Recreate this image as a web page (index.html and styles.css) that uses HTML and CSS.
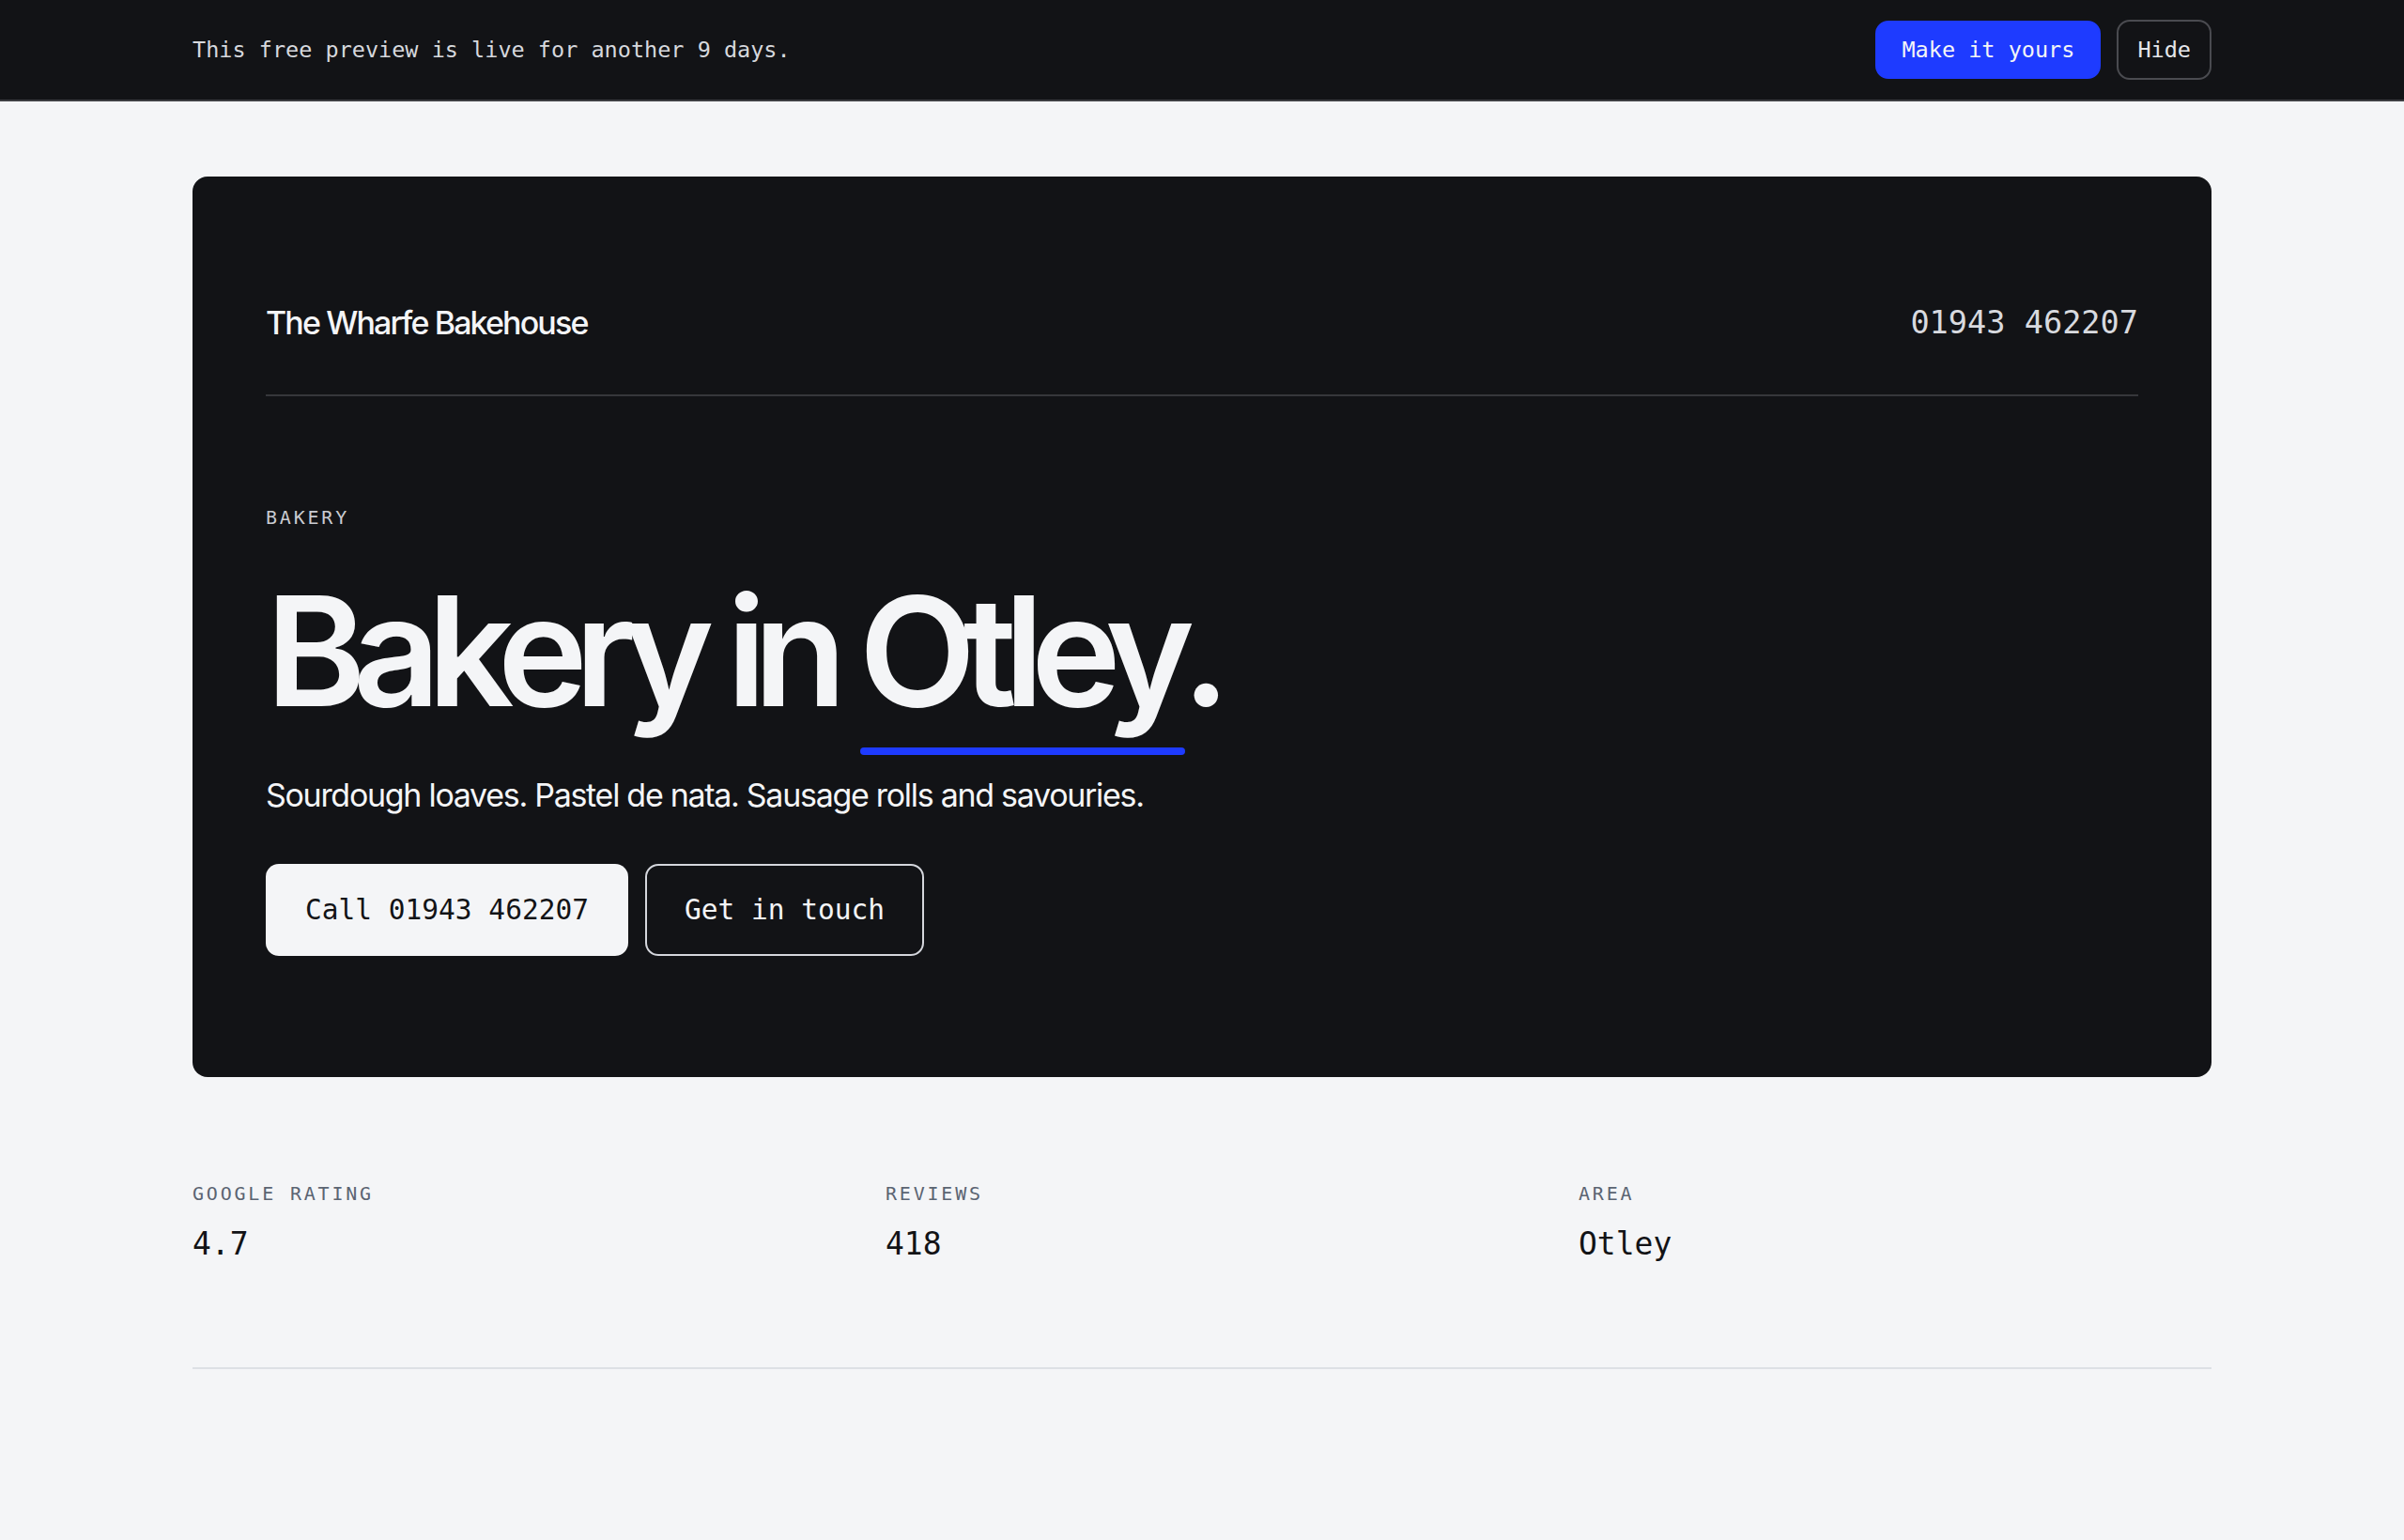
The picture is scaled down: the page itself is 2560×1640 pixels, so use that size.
FILE: index.html
```html
<!DOCTYPE html>
<html lang="en">
<head>
<meta charset="utf-8">
<title>The Wharfe Bakehouse — Bakery in Otley</title>
<link rel="stylesheet" href="styles.css">
</head>
<body>
  <div class="preview-bar">
    <div class="wrap preview-inner">
      <p class="preview-text">This free preview is live for another 9 days.</p>
      <div class="preview-actions">
        <button class="btn-claim" type="button">Make it yours</button>
        <button class="btn-hide" type="button">Hide</button>
      </div>
    </div>
  </div>

  <main class="wrap">
    <section class="hero-card">
      <header class="hero-head">
        <span class="brand">The Wharfe Bakehouse</span>
        <span class="head-phone">01943 462207</span>
      </header>
      <div class="hero-body">
        <p class="eyebrow">BAKERY</p>
        <h1 class="hero-title">Bakery in <span class="hl">Otley</span>.</h1>
        <p class="hero-sub">Sourdough loaves. Pastel de nata. Sausage rolls and savouries.</p>
        <div class="hero-actions">
          <a class="btn-primary" href="#">Call 01943 462207</a>
          <a class="btn-outline" href="#">Get in touch</a>
        </div>
      </div>
    </section>

    <section class="stats">
      <div class="stat">
        <span class="stat-label">GOOGLE RATING</span>
        <span class="stat-value">4.7</span>
      </div>
      <div class="stat">
        <span class="stat-label">REVIEWS</span>
        <span class="stat-value">418</span>
      </div>
      <div class="stat">
        <span class="stat-label">AREA</span>
        <span class="stat-value">Otley</span>
      </div>
    </section>
  </main>
</body>
</html>
```

FILE: styles.css
```css
* { box-sizing: border-box; }

html, body {
  margin: 0;
  padding: 0;
}

body {
  background: #f4f5f7;
  color: #121316;
  font-family: "Inter", "Noto Sans", sans-serif;
}

.wrap {
  max-width: 2150px;
  margin: 0 auto;
}

/* preview bar */
.preview-bar {
  background: #121316;
  border-bottom: 2px solid #3c3d41;
}

.preview-inner {
  height: 106px;
  display: flex;
  align-items: center;
  justify-content: space-between;
}

.preview-text {
  margin: 0;
  font-family: "DejaVu Sans Mono", "Liberation Mono", monospace;
  font-size: 23.5px;
  color: #d6d8dd;
}

.preview-actions {
  display: flex;
  gap: 17px;
  align-items: center;
}

.btn-claim,
.btn-hide {
  font-family: "DejaVu Sans Mono", "Liberation Mono", monospace;
  font-size: 23.5px;
  height: 62px;
  border-radius: 14px;
  cursor: pointer;
}

.btn-claim {
  background: #1e3bff;
  border: 2px solid #1e3bff;
  color: #f4f5f7;
  padding: 0 26px;
}

.btn-hide {
  background: transparent;
  border: 2px solid #4a4b50;
  color: #e4e6ea;
  padding: 0 20px;
  height: 64px;
}

/* hero card */
.hero-card {
  margin-top: 80px;
  background: #121316;
  border-radius: 16px;
  padding: 80px 78px 80px;
  color: #f4f5f7;
}

.hero-head {
  display: flex;
  justify-content: space-between;
  align-items: center;
  padding: 56px 0 56px;
  border-bottom: 2px solid #36373b;
}

.brand {
  font-size: 34px;
  line-height: 40px;
  letter-spacing: -0.055em;
  font-weight: 500;
  color: #f4f5f7;
}

.head-phone {
  font-family: "DejaVu Sans Mono", "Liberation Mono", monospace;
  font-size: 33.6px;
  line-height: 40px;
  color: #d8dadf;
}

.hero-body {
  padding-top: 115px;
  padding-bottom: 49px;
}

.eyebrow {
  margin: 0 0 47px;
  font-family: "DejaVu Sans Mono", "Liberation Mono", monospace;
  font-size: 20px;
  line-height: 28px;
  letter-spacing: 0.14em;
  color: #c9cbd1;
}

.hero-title {
  margin: 0 0 49px;
  font-size: 162px;
  line-height: 1;
  font-weight: 600;
  letter-spacing: -0.085em;
  color: #f4f5f7;
}

.hl {
  position: relative;
}

.hl::after {
  content: "";
  position: absolute;
  left: 1px;
  right: -4px;
  bottom: -13px;
  height: 8px;
  border-radius: 4px;
  background: #1e3bff;
}

.hero-sub {
  margin: 0 0 49px;
  font-size: 34px;
  line-height: 48px;
  letter-spacing: -0.038em;
  color: #f4f5f7;
}

.hero-actions {
  display: flex;
  gap: 18px;
}

.btn-primary,
.btn-outline {
  display: inline-flex;
  align-items: center;
  justify-content: center;
  height: 98px;
  border-radius: 14px;
  font-family: "DejaVu Sans Mono", "Liberation Mono", monospace;
  font-size: 29.5px;
  text-decoration: none;
}

.btn-primary {
  background: #f4f5f7;
  color: #121316;
  padding: 0 42px;
}

.btn-outline {
  border: 2px solid #d4d6dc;
  color: #f4f5f7;
  padding: 0 40px;
}

/* stats */
.stats {
  display: grid;
  grid-template-columns: repeat(3, 1fr);
  gap: 64px;
  padding: 110px 0 110px;
  border-bottom: 2px solid #dde0e5;
}

.stat {
  display: flex;
  flex-direction: column;
  gap: 18px;
}

.stat-label {
  font-family: "DejaVu Sans Mono", "Liberation Mono", monospace;
  font-size: 20px;
  line-height: 28px;
  letter-spacing: 0.14em;
  color: #5b6472;
}

.stat-value {
  font-family: "DejaVu Sans Mono", "Liberation Mono", monospace;
  font-size: 33px;
  line-height: 43px;
  color: #121316;
}
```
